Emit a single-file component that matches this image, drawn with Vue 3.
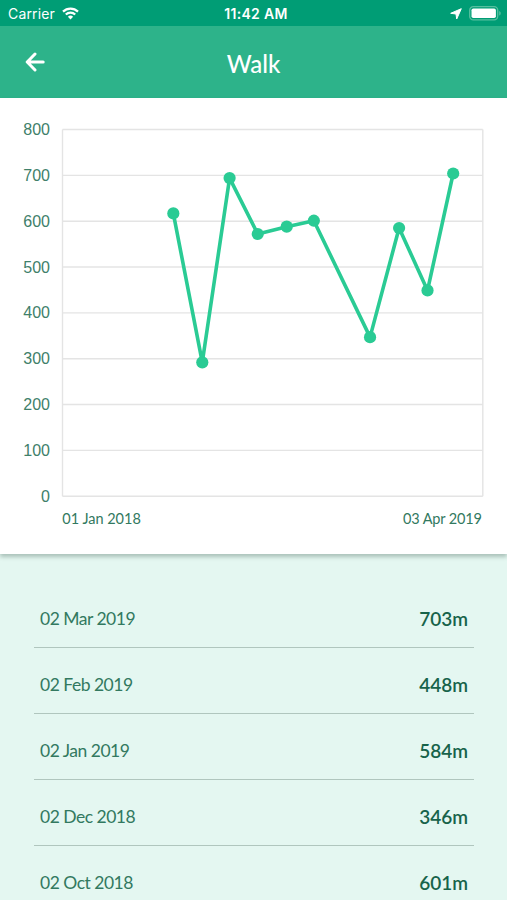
<script setup>
import { computed } from 'vue';

const plot = { left: 62.5, right: 482.8, top: 31.5, bottom: 398.2 };
const maxDistance = 800;
const totalDays = 457;

// day is counted from 01 Jan 2018
const walks = [
  { day: 120.5, distance: 617 },
  { day: 152, distance: 292 },
  { day: 181.7, distance: 694 },
  { day: 212.3, distance: 572 },
  { day: 243.8, distance: 588 },
  { day: 273.3, distance: 601 },
  { day: 334.4, distance: 347 },
  { day: 366, distance: 585 },
  { day: 396.9, distance: 449 },
  { day: 424.8, distance: 704 },
];

const entries = [
  { date: '02 Mar 2019', value: '703m' },
  { date: '02 Feb 2019', value: '448m' },
  { date: '02 Jan 2019', value: '584m' },
  { date: '02 Dec 2018', value: '346m' },
  { date: '02 Oct 2018', value: '601m' },
];

const ticks = [800, 700, 600, 500, 400, 300, 200, 100, 0];

const toX = (day) => plot.left + (day / totalDays) * (plot.right - plot.left);
const toY = (distance) => plot.bottom - (distance / maxDistance) * (plot.bottom - plot.top);

const points = computed(() => walks.map((w) => ({ x: toX(w.day), y: toY(w.distance) })));
const line = computed(() => points.value.map((p) => `${p.x},${p.y}`).join(' '));
</script>

<template>
  <div class="screen">
    <div class="status-bar">
      <div class="status-left">
        <span class="carrier">Carrier</span>
        <svg class="wifi" width="17" height="13" viewBox="0 0 17 13">
          <path d="M1 4.600a10.700 10.700 0 0 1 15 0" />
          <path d="M3.800 7.500a6.700 6.700 0 0 1 9.400 0" />
          <path class="dot" d="M8.500 12.400L5.900 9.800a3.700 3.700 0 0 1 5.200 0z" />
        </svg>
      </div>
      <span class="time">11:42 AM</span>
      <div class="status-right">
        <svg width="12" height="12" viewBox="0 0 12 12">
          <path d="M11.300 0.700L6.700 11L6 6L0.700 5.300z" fill="#fff" stroke="#fff" stroke-width="1" stroke-linejoin="round" />
        </svg>
        <svg width="32" height="15" viewBox="0 0 32 15">
          <rect x="0.700" y="0.700" width="28" height="13.200" rx="3.600" fill="none" stroke="#57bf9f" stroke-width="1.300" />
          <rect x="2.500" y="2.500" width="24.400" height="9.600" rx="1.800" fill="#fff" />
          <path d="M30.200 5v4.600c1-.4 1.500-1.300 1.500-2.300s-.5-1.900-1.500-2.300z" fill="#57bf9f" />
        </svg>
      </div>
    </div>

    <header class="header">
      <button class="back" aria-label="Back">
        <svg width="20" height="20" viewBox="0 0 20 20">
          <path d="M10 2L2.200 10l7.800 8M2.500 10h15.700" />
        </svg>
      </button>
      <h1 class="title">Walk</h1>
    </header>

    <section class="chart">
      <svg width="507" height="456" viewBox="0 0 507 456">
        <g v-for="tick in ticks" :key="tick">
          <line class="grid" :x1="plot.left" :x2="plot.right" :y1="toY(tick)" :y2="toY(tick)" />
          <text class="tick" x="50" :y="toY(tick) + 5.6">{{ tick }}</text>
        </g>
        <line class="grid" :x1="plot.left" :x2="plot.left" :y1="plot.top" :y2="plot.bottom" />
        <line class="grid" :x1="plot.right" :x2="plot.right" :y1="plot.top" :y2="plot.bottom" />
        <polyline class="line" :points="line" />
        <circle v-for="(p, index) in points" :key="index" class="point" :cx="p.x" :cy="p.y" r="6.1" />
        <text class="range" x="62.3" y="426" textLength="78.5">01 Jan 2018</text>
        <text class="range" x="403" y="426" textLength="79">03 Apr 2019</text>
      </svg>
    </section>

    <ul class="entries">
      <li v-for="entry in entries" :key="entry.date" class="entry">
        <span class="date">{{ entry.date }}</span>
        <span class="value">{{ entry.value }}</span>
      </li>
    </ul>
  </div>
</template>

<style>
body {
  margin: 0;
  overflow: hidden;
}
</style>

<style scoped>
.screen {
  height: 900px;
  display: flex;
  flex-direction: column;
  overflow: hidden;
  background-color: #e4f7f1;
  font-family: Lato, "Open Sans", sans-serif;
}

.status-bar {
  flex: none;
  height: 26px;
  box-sizing: border-box;
  padding: 1px 6px 0 8px;
  display: grid;
  grid-template-columns: 1fr auto 1fr;
  align-items: center;
  background-color: #009d75;
  color: white;
  font-family: Inter, "Liberation Sans", sans-serif;
}

.status-left {
  display: flex;
  align-items: center;
  gap: 7px;
}

.carrier {
  font-size: 14px;
  letter-spacing: 0.15px;
}

.wifi path {
  fill: none;
  stroke: white;
  stroke-width: 2.2;
}

.wifi .dot {
  fill: white;
  stroke: none;
}

.time {
  margin-left: 3px;
  font-size: 14px;
  font-weight: 600;
  letter-spacing: 0.3px;
}

.status-right {
  display: flex;
  justify-content: flex-end;
  align-items: center;
  gap: 7px;
}

.header {
  flex: none;
  height: 72px;
  padding: 0 25px;
  display: grid;
  grid-template-columns: 40px 1fr 40px;
  align-items: center;
  background-color: #2db38a;
  color: white;
}

.back {
  display: flex;
  padding: 0;
  border: none;
  background: none;
  cursor: pointer;
}

.back path {
  fill: none;
  stroke: white;
  stroke-width: 3;
  stroke-linecap: round;
  stroke-linejoin: round;
}

.title {
  margin: 2px 0 0;
  text-align: center;
  font-size: 24px;
  font-weight: 500;
}

.chart {
  flex: none;
  height: 456px;
  background-color: white;
  box-shadow: 0 3px 4px rgba(0, 40, 25, 0.25);
}

.chart svg {
  display: block;
}

.grid {
  stroke: #e4e4e4;
  stroke-width: 1.4;
}

.tick {
  fill: #40806a;
  font-family: "Liberation Sans", Arial, sans-serif;
  font-size: 16px;
  text-anchor: end;
}

.line {
  fill: none;
  stroke: #2acb94;
  stroke-width: 3.6;
  stroke-linejoin: round;
}

.point {
  fill: #2acb94;
}

.range {
  fill: #327960;
  font-size: 14.5px;
}

.entries {
  list-style: none;
  margin: 0;
  padding: 28px 33px 0 34px;
}

.entry {
  height: 66px;
  box-sizing: border-box;
  padding: 7px 6px 0;
  display: flex;
  justify-content: space-between;
  align-items: center;
  border-bottom: 1px solid #b0c6be;
  font-size: 17.5px;
}

.date {
  color: #327960;
  letter-spacing: -0.5px;
}

.value {
  color: #17634a;
  font-size: 19px;
  font-weight: 600;
}
</style>
